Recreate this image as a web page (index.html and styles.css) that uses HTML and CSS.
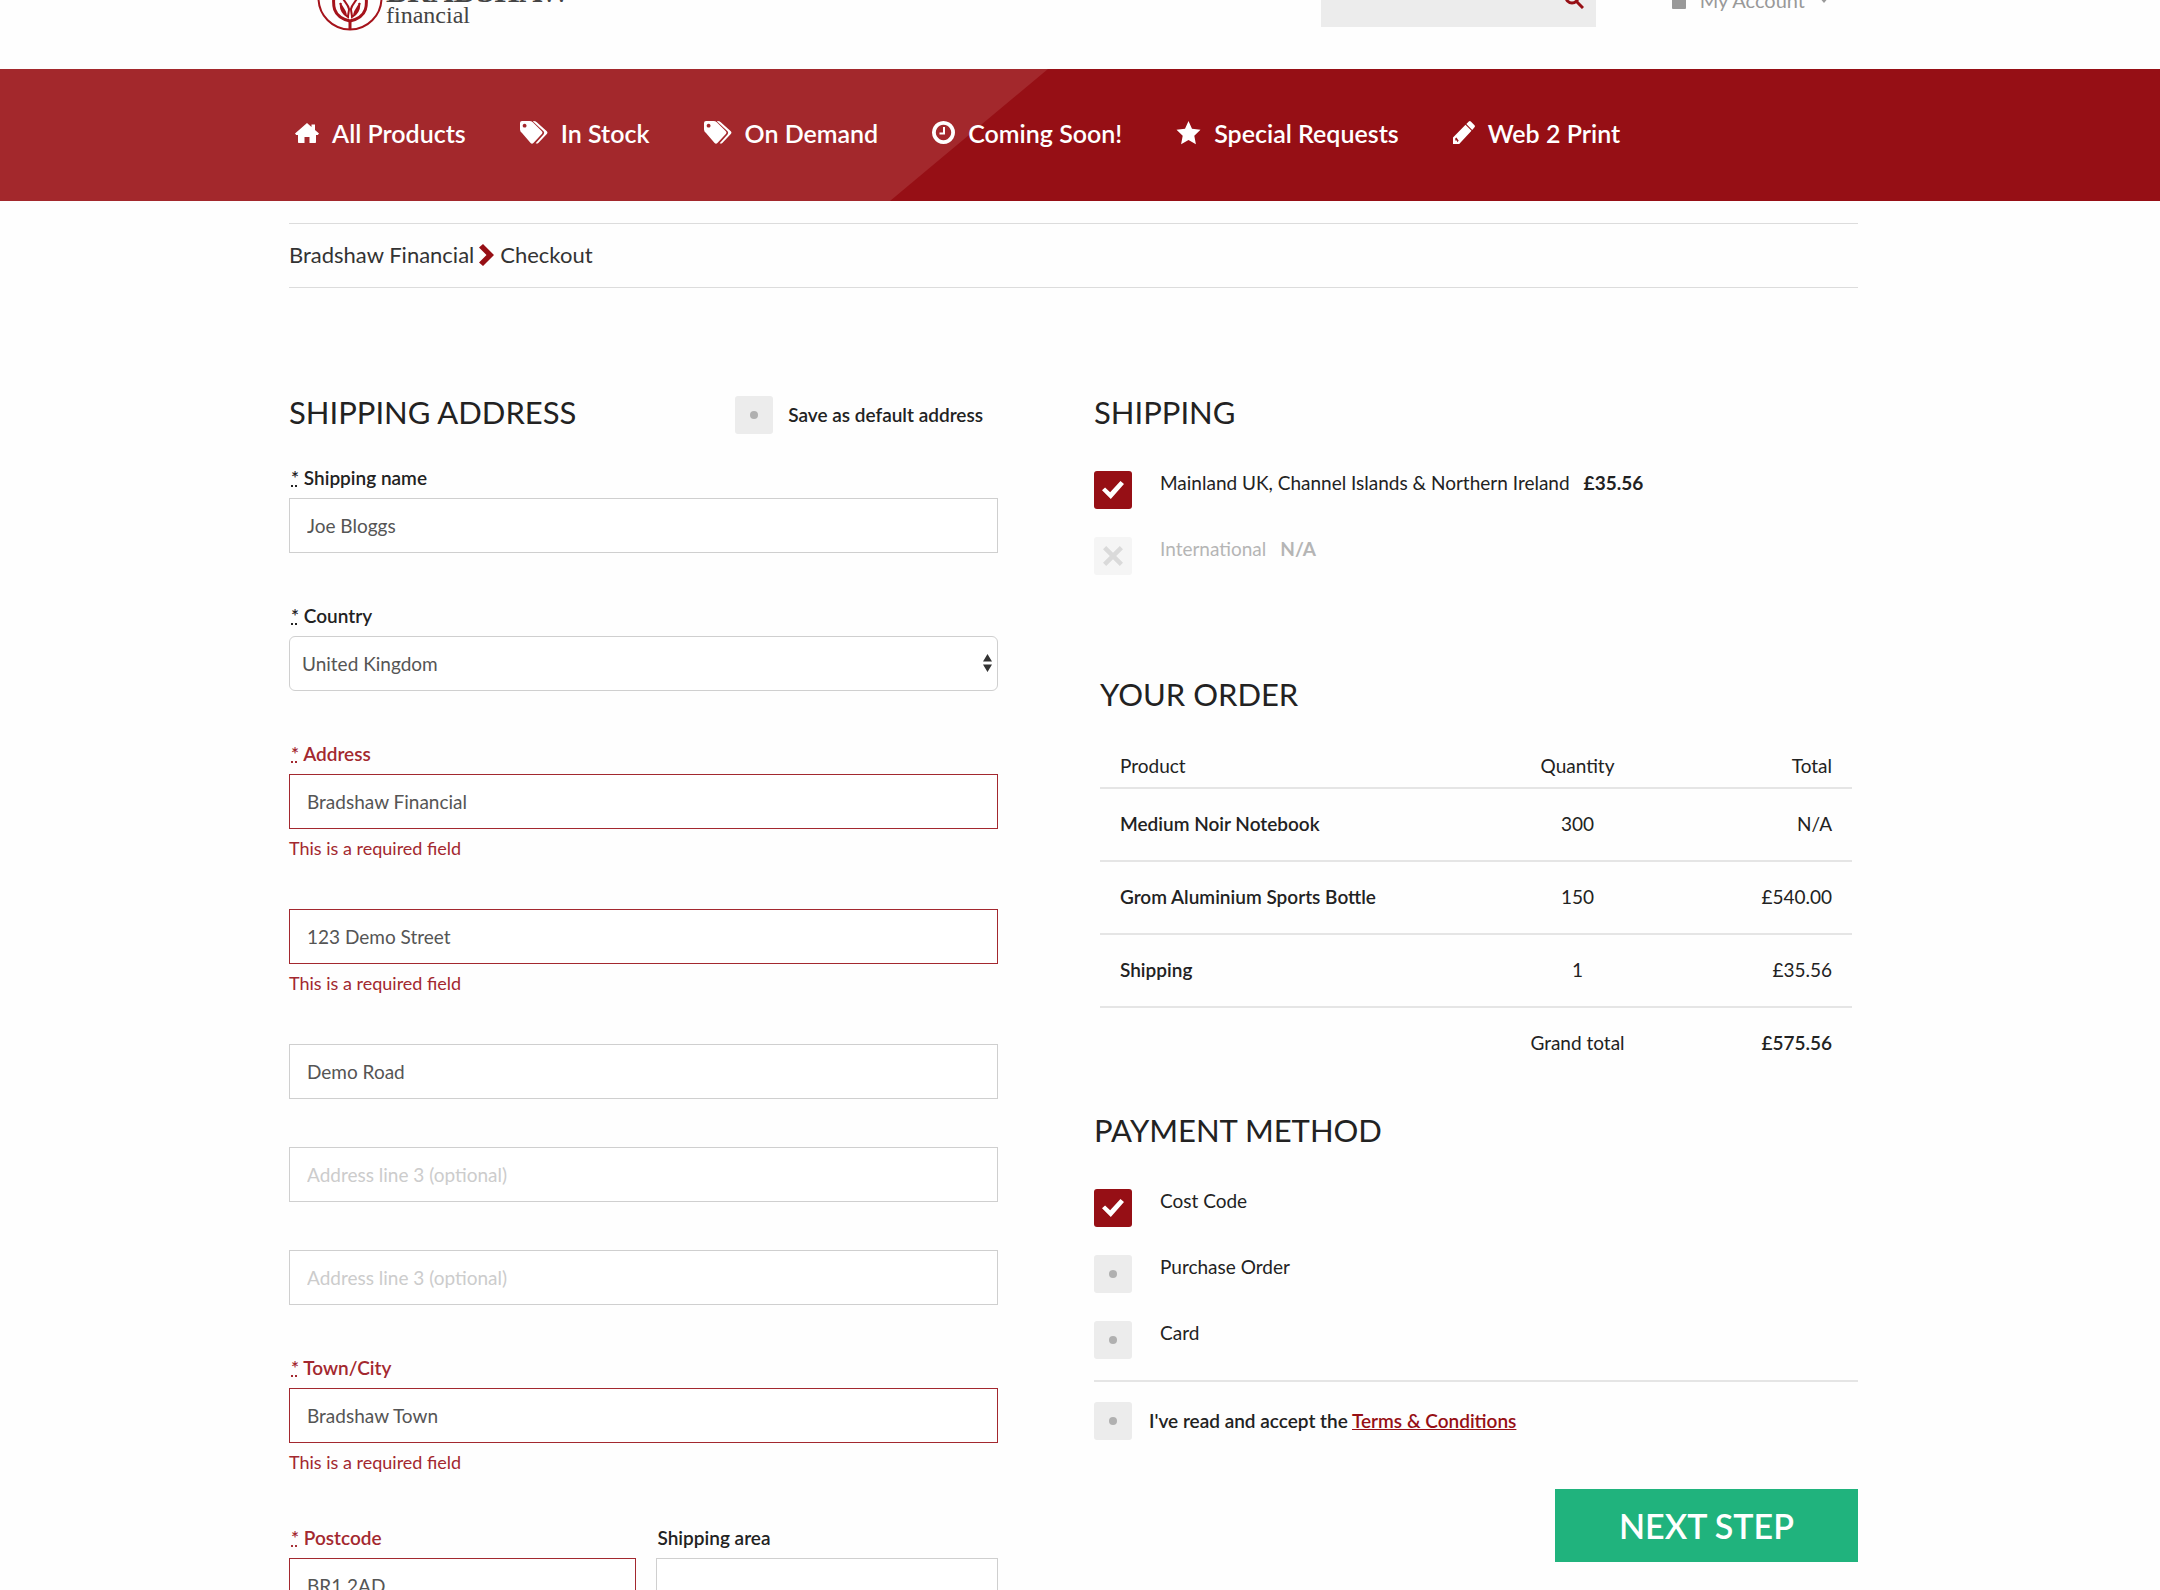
FILE: index.html
```html
<!DOCTYPE html>
<html lang="en">
<head>
    <meta charset="utf-8">
    <title>Checkout | Bradshaw Financial</title>
    <meta name="viewport" content="width=device-width, initial-scale=1">
    <link rel="stylesheet" href="styles.css">
</head>
<body>

<header class="header container">
    <a class="logo" href="#">
        <svg class="logo-mark" viewBox="0 0 66 66" aria-hidden="true">
            <circle cx="33" cy="33" r="31.5"/>
            <path class="thick" d="M18 24c-3 16-3 28 15 32 18-4 18-16 15-32"/>
            <path class="thick" d="M33 56v8"/>
            <path d="M27 30c-4 4 4 8 5 14 0 3-1 5-1 8-6-4-8-8-7-14M23 38c1 4 5 6 6 12"/>
            <path d="M39 30c4 4-4 8-5 14 0 3 1 5 1 8 6-4 8-8 7-14M43 38c-1 4-5 6-6 12"/>
        </svg>
        <span class="logo-text">
            <span class="logo-name">BRADSHAW</span>
            <span class="logo-sub">financial</span>
        </span>
    </a>
    <form class="search" role="search">
        <input type="search" class="search-input" aria-label="Search products">
        <button type="button" class="search-btn" aria-label="Search">
            <svg viewBox="0 0 20 20" width="20" height="20"><circle cx="8" cy="8" r="6"/><path d="M12 12l7 7"/></svg>
        </button>
    </form>
    <a class="account" href="#">
        <svg viewBox="0 0 14 18" width="14" height="18"><path d="M1 8h12q1 0 1 1v8q0 1-1 1H1q-1 0-1-1V9q0-1 1-1z"/><path d="M2 9V5a5 5 0 0 1 10 0v4H9.500V5a2.500 2.500 0 0 0-5 0v4z"/></svg>
        <span>My Account</span>
        <svg viewBox="0 0 10 6" width="10" height="6"><path d="M0 0h10L5 6z"/></svg>
    </a>
</header>

<nav class="nav">
    <ul class="nav-list container">
        <li><a href="#">
            <svg viewBox="0 0 24 20" width="24" height="20"><path d="M12 0l4.500 4V1.500h3.500v5.500l4 3.600-1.200 1.400H21v7.200q0 .8-.8.8H14.500v-6h-5v6H3.800q-.8 0-.8-.8V12H1.200L0 10.600z"/></svg>
            All Products</a></li>
        <li><a href="#">
            <svg viewBox="0 0 28 23" width="28" height="23"><path fill-rule="evenodd" d="M0 2q0-2 2-2h7.500q2 0 3.300 1.300l9 8.900q1.300 1.400 0 2.800l-8.400 9q-1.400 1.300-2.800 0L2 12.100Q0 10.500 0 8.500zM4.600 2.800a1.900 1.900 0 1 0 .01 0z"/><path d="M13.500 0q2 0 3.300 1.300l10 8.900q1.300 1.400 0 2.800l-8.500 9q-1.200 1-2.600.2l7.800-8.700q1.300-1.700 0-3.300L13 .4z"/></svg>
            In Stock</a></li>
        <li><a href="#">
            <svg viewBox="0 0 28 23" width="28" height="23"><path fill-rule="evenodd" d="M0 2q0-2 2-2h7.500q2 0 3.300 1.300l9 8.900q1.300 1.400 0 2.800l-8.400 9q-1.400 1.300-2.800 0L2 12.100Q0 10.500 0 8.500zM4.600 2.800a1.900 1.900 0 1 0 .01 0z"/><path d="M13.500 0q2 0 3.300 1.300l10 8.900q1.300 1.400 0 2.800l-8.500 9q-1.200 1-2.600.2l7.800-8.700q1.300-1.700 0-3.300L13 .4z"/></svg>
            On Demand</a></li>
        <li><a href="#">
            <svg viewBox="0 0 23 23" width="23" height="23"><path fill-rule="evenodd" d="M11.500 0a11.500 11.500 0 1 1-.01 0zM11.500 3.800a7.700 7.700 0 1 0 .01 0zM11 6h2v7.500H7.500v-2H11z"/></svg>
            Coming Soon!</a></li>
        <li><a href="#">
            <svg viewBox="0 0 25 24" width="25" height="24"><path d="M12.500 0l3.500 7.800 8.500 1-6.200 5.900 1.600 8.500-7.400-4.100-7.400 4.100 1.600-8.500L.5 8.800l8.500-1z"/></svg>
            Special Requests</a></li>
        <li><a href="#">
            <svg viewBox="0 0 22 23" width="22" height="23"><path fill-rule="evenodd" d="M0 23v-6.500L12.500 3.800l6 6L6.200 23zM2.300 17.200v2.300h1.800v1.800l1.600-1.500-2.300-3.300zM13.300 3l2.500-2.500q1-.9 2 0l3.700 3.800q.9 1 0 2L19.200 9z"/></svg>
            Web 2 Print</a></li>
    </ul>
</nav>

<div class="container">
    <div class="breadcrumb">
        <a href="#">Bradshaw Financial</a>
        <svg viewBox="0 0 16 22" width="16" height="22" aria-hidden="true"><path d="M0 3.500L4 0l11 11L4 22l-4-3.500L7.500 11z"/></svg>
        <span>Checkout</span>
    </div>
</div>

<main class="checkout container">

    <form class="address">
        <div class="address-head">
            <h2>SHIPPING ADDRESS</h2>
            <label class="save"><input type="checkbox" class="tick"> Save as default address</label>
        </div>

        <div class="field">
            <label for="name"><abbr title="required">*</abbr> Shipping name</label>
            <input type="text" id="name" value="Joe Bloggs">
        </div>
        <div class="field">
            <label for="country"><abbr title="required">*</abbr> Country</label>
            <div class="select">
                <select id="country"><option>United Kingdom</option></select>
                <svg viewBox="0 0 9 18" width="9" height="18" aria-hidden="true"><path d="M4.500 0L9 7.500H0zM0 10.500h9L4.500 18z"/></svg>
            </div>
        </div>
        <div class="field error">
            <label for="address1"><abbr title="required">*</abbr> Address</label>
            <input type="text" id="address1" value="Bradshaw Financial">
            <p class="message">This is a required field</p>
        </div>
        <div class="field error">
            <input type="text" aria-label="Address line 1" value="123 Demo Street">
            <p class="message">This is a required field</p>
        </div>
        <div class="field">
            <input type="text" aria-label="Address line 2" value="Demo Road">
        </div>
        <div class="field">
            <input type="text" aria-label="Address line 3" placeholder="Address line 3 (optional)">
        </div>
        <div class="field">
            <input type="text" aria-label="Address line 4" placeholder="Address line 3 (optional)">
        </div>
        <div class="field error">
            <label for="town"><abbr title="required">*</abbr> Town/City</label>
            <input type="text" id="town" value="Bradshaw Town">
            <p class="message">This is a required field</p>
        </div>
        <div class="field-row">
            <div class="field error">
                <label for="postcode"><abbr title="required">*</abbr> Postcode</label>
                <input type="text" id="postcode" value="BR1 2AD">
            </div>
            <div class="field">
                <label for="area">Shipping area</label>
                <input type="text" id="area">
            </div>
        </div>
    </form>

    <form class="summary">
        <h2>SHIPPING</h2>
        <ul class="options">
            <li><label><input type="radio" name="shipping" class="tick" checked> Mainland UK, Channel Islands &amp; Northern Ireland <strong>£35.56</strong></label></li>
            <li><label class="disabled"><input type="radio" name="shipping" class="tick" disabled> International <strong>N/A</strong></label></li>
        </ul>

        <section class="order">
            <h2>YOUR ORDER</h2>
            <table>
                <thead>
                    <tr><th>Product</th><th>Quantity</th><th>Total</th></tr>
                </thead>
                <tbody>
                    <tr><td>Medium Noir Notebook</td><td>300</td><td>N/A</td></tr>
                    <tr><td>Grom Aluminium Sports Bottle</td><td>150</td><td>£540.00</td></tr>
                    <tr><td>Shipping</td><td>1</td><td>£35.56</td></tr>
                </tbody>
                <tfoot>
                    <tr><td></td><td>Grand total</td><td>£575.56</td></tr>
                </tfoot>
            </table>
        </section>

        <h2>PAYMENT METHOD</h2>
        <ul class="options payment">
            <li><label><input type="radio" name="payment" class="tick" checked> Cost Code</label></li>
            <li><label><input type="radio" name="payment" class="tick"> Purchase Order</label></li>
            <li><label><input type="radio" name="payment" class="tick"> Card</label></li>
        </ul>

        <div class="terms">
            <input type="checkbox" class="tick" id="terms">
            <label for="terms">I've read and accept the <a href="#">Terms &amp; Conditions</a></label>
        </div>

        <button type="button" class="next">NEXT STEP</button>
    </form>

</main>

</body>
</html>
```

FILE: styles.css
```css
* {
    box-sizing: border-box;
}

body {
    height: 100vh;
    margin: 0;
    overflow: hidden;
    background: #fefefe;
    color: #222;
    font: 19px/24px Lato, "Open Sans", sans-serif;
}

a {
    color: inherit;
    text-decoration: none;
}

ul {
    margin: 0;
    padding: 0;
    list-style: none;
}

h2 {
    margin: 0;
    font-size: 31px;
    line-height: 32px;
    font-weight: normal;
}

.container {
    padding: 0 302px 0 289px;
}

/* header */

.header {
    display: flex;
    align-items: flex-end;
    height: 69px;
    padding-bottom: 38px;
    overflow: hidden;
}

.logo {
    display: flex;
    align-items: flex-end;
    gap: 3px;
    margin-left: 28px;
}

.logo-mark {
    width: 66px;
    height: 66px;
    fill: none;
    stroke: #a5131b;
    stroke-width: 2;
}

.logo-mark .thick {
    stroke-width: 3;
}

.logo-text {
    padding-bottom: 4px;
    color: #444;
    font-family: "Liberation Serif", serif;
}

.logo-name,
.logo-sub {
    display: block;
}

.logo-name {
    font-size: 32px;
    line-height: 24px;
    font-weight: bold;
}

.logo-sub {
    font-size: 24px;
    line-height: 24px;
}

.search {
    display: flex;
    margin-left: auto;
    margin-bottom: 4px;
    background: #ececec;
}

.search-input {
    width: 231px;
    height: 54px;
    border: 0;
    background: none;
}

.search-btn {
    width: 44px;
    padding: 0;
    border: 0;
    background: none;
}

.search-btn svg {
    fill: none;
    stroke: #960f15;
    stroke-width: 3;
}

.account {
    display: flex;
    align-items: center;
    gap: 14px;
    margin: 0 29px 19px 76px;
    color: #999;
    font-size: 20px;
}

.account svg {
    fill: #999;
}

/* main menu */

.nav {
    position: relative;
    background: #960f15;
}

.nav::before {
    content: "";
    position: absolute;
    inset: 0 auto 0 0;
    width: 1048px;
    background: #a3282c;
    clip-path: polygon(0 0, 100% 0, calc(100% - 158px) 100%, 0 100%);
}

.nav-list {
    position: relative;
    display: flex;
    gap: 54px;
    padding-left: 295px;
}

.nav-list a {
    display: flex;
    align-items: center;
    gap: 13px;
    height: 132px;
    padding-bottom: 5px;
    color: #fff;
    font-size: 25px;
    font-weight: 600;
    white-space: nowrap;
}

.nav-list svg {
    fill: #fff;
}

.breadcrumb {
    display: flex;
    align-items: center;
    gap: 5px;
    height: 65px;
    margin-top: 22px;
    padding-bottom: 2px;
    border: solid #dcdcdc;
    border-width: 1px 0;
    color: #333;
    font-size: 22px;
}

.breadcrumb svg {
    fill: #960f15;
}

/* checkout */

.checkout {
    display: grid;
    grid-template-columns: 709fr 764fr;
    gap: 96px;
    padding-top: 108px;
}

.address-head {
    display: flex;
    justify-content: space-between;
    align-items: flex-start;
    margin-bottom: 29px;
}

.save {
    display: flex;
    align-items: center;
    gap: 15px;
    margin-right: 15px;
    font-weight: 600;
}

.field {
    margin-bottom: 48px;
}

.field label {
    display: block;
    padding: 0 2px 5px;
    line-height: 30px;
    font-weight: 600;
}

.field input,
.field select {
    display: block;
    width: 100%;
    height: 55px;
    padding: 0 17px;
    border: 1px solid #cfcfcf;
    background: #fff;
    color: #555;
    font: inherit;
}

.field select {
    appearance: none;
    padding: 0 12px;
    border-radius: 6px;
}

.field input::placeholder {
    color: #ccc;
}

.select {
    position: relative;
}

.select svg {
    position: absolute;
    top: 18px;
    right: 6px;
    fill: #333;
}

.error label,
.message {
    color: #a3282f;
}

.field.error input {
    border-color: #a3282f;
}

.message {
    margin: 0;
    padding: 7px 0 1px;
    font-size: 18px;
}

.field-row {
    display: grid;
    grid-template-columns: 346fr 342fr;
    gap: 20px;
}

/* tick boxes */

.tick {
    display: grid;
    place-items: center;
    flex: none;
    appearance: none;
    width: 38px;
    height: 38px;
    margin: 0;
    border-radius: 3px;
    background: #ececec;
}

.tick::before {
    content: "";
    width: 8px;
    height: 8px;
    border-radius: 50%;
    background: #b0b0b0;
}

.tick:checked {
    background: #960f15;
}

.tick:checked::before {
    width: 22px;
    height: 18px;
    border-radius: 0;
    background: #fff;
    clip-path: polygon(0 52%, 14% 36%, 37% 62%, 84% 0, 100% 16%, 40% 100%);
}

.tick:disabled {
    background: #f5f5f5;
}

.tick:disabled::before {
    width: 20px;
    height: 20px;
    border-radius: 0;
    background: #dadada;
    clip-path: polygon(0 16%, 16% 0, 50% 34%, 84% 0, 100% 16%, 66% 50%, 100% 84%, 84% 100%, 50% 66%, 16% 100%, 0 84%, 34% 50%);
}

.options {
    margin-top: 43px;
}

.options label {
    display: flex;
    align-items: flex-start;
    margin-bottom: 28px;
}

.options .tick {
    margin-right: 28px;
}

.options strong {
    margin-left: 14px;
}

.options .disabled {
    color: #b5b5b5;
}

/* order table */

.order {
    margin: 103px 6px 35px;
}

.order table {
    width: 100%;
    margin-top: 44px;
    border-collapse: collapse;
    table-layout: fixed;
}

.order th {
    padding: 0 20px 9px;
    border-bottom: 2px solid #e5e5e5;
    font-weight: normal;
}

.order td {
    padding: 23px 20px 24px;
    border-bottom: 2px solid #e5e5e5;
}

.order tr > :nth-child(1) {
    width: 51%;
    text-align: left;
}

.order tr > :nth-child(2) {
    width: 25%;
    text-align: center;
}

.order tr > :nth-child(3) {
    width: 24%;
    text-align: right;
}

.order td:first-child,
.order tfoot td:last-child {
    font-weight: 600;
}

.order tfoot td {
    border: 0;
}

.terms {
    display: flex;
    align-items: center;
    gap: 17px;
    margin-top: 21px;
    padding-top: 20px;
    border-top: 2px solid #e5e5e5;
    font-weight: 600;
}

.payment li:last-child label {
    margin-bottom: 0;
}

.terms a {
    color: #960f15;
    text-decoration: underline;
}

.next {
    display: block;
    width: 303px;
    height: 73px;
    margin: 49px 0 0 auto;
    border: 0;
    background: #20b37d;
    color: #fff;
    font: 600 34px Lato, "Open Sans", sans-serif;
}
```
